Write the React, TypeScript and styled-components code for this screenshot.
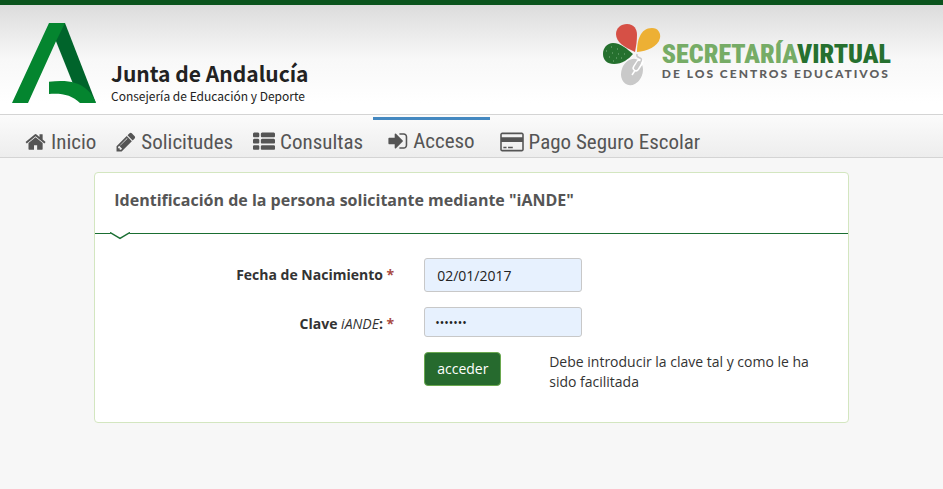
import React, { useState } from "react";
import styled, { createGlobalStyle } from "styled-components";

const GlobalStyle = createGlobalStyle`
  *, *::before, *::after { box-sizing: border-box; }
  body {
    margin: 0;
    background: #f7f7f7;
    color: #333;
    font-family: "Open Sans", "Noto Sans", sans-serif;
    font-size: 14px;
    line-height: 20px;
  }
`;

const Header = styled.header`
  display: flex;
  justify-content: space-between;
  align-items: flex-start;
  padding: 18px 52px 11px 12px;
  border-top: 5px solid #0b541d;
  background: linear-gradient(#dcdcdc, #f8f8f8 50%, #ffffff 90%);
`;

const Brand = styled.a`
  display: flex;
  align-items: flex-end;
  gap: 15px;
  color: #222;
  text-decoration: none;
`;

const BrandMark = styled.svg`
  width: 84px;
  height: 80px;
`;

const BrandText = styled.div`
  display: flex;
  flex-direction: column;
  font-family: "Noto Sans CJK SC", "Noto Sans", sans-serif;
  white-space: nowrap;
`;

const BrandName = styled.strong`
  font-size: 21px;
  line-height: 32px;
`;

const BrandUnit = styled.span`
  font-size: 12px;
  line-height: 14px;
`;

const Portal = styled.a`
  display: flex;
  text-decoration: none;
  white-space: nowrap;
`;

const PortalMark = styled.svg`
  width: 60px;
  height: 64px;
`;

const PortalText = styled.div`
  display: flex;
  flex-direction: column;
  padding-top: 18px;
`;

const PortalName = styled.strong`
  color: #76ac66;
  font-family: "Roboto Condensed", Roboto, sans-serif;
  font-size: 26px;
  font-weight: 900;
  line-height: 26px;
`;

const PortalNameDark = styled.span`
  color: #26702f;
`;

const PortalTagline = styled.span`
  color: #5f5f5f;
  font-family: Lato, sans-serif;
  font-size: 12px;
  font-weight: 900;
  letter-spacing: 2px;
  line-height: 14px;
`;

const Nav = styled.nav`
  display: flex;
  align-items: stretch;
  height: 44px;
  padding-left: 15px;
  border-top: 1px solid #d4d4d4;
  border-bottom: 1px solid #d4d4d4;
  background: linear-gradient(#fbfbfb, #ededed);
`;

const NavLink = styled.a<{ $active?: boolean }>`
  display: flex;
  align-items: center;
  gap: 5px;
  margin-top: 2px;
  padding: ${(p) => (p.$active ? "4px 15px 0" : "9px 10px 0")};
  border-top: ${(p) => (p.$active ? "3px solid #4488c0" : "0")};
  color: #555;
  font-family: "Roboto Condensed", "Liberation Sans", sans-serif;
  font-size: 21px;
  line-height: 26px;
  text-decoration: none;
  white-space: nowrap;
`;

const NavIcon = styled.svg<{ $w: number }>`
  width: ${(p) => p.$w}px;
  height: 22px;
  flex: none;
  fill: currentColor;
`;

const Card = styled.main`
  width: 80%;
  margin: 14px auto 0;
  border: 1px solid #d3e6c0;
  border-radius: 4px;
  background: #fff;
`;

const CardHeader = styled.header`
  position: relative;
  padding: 17px 19px 23px;
  border-bottom: 1px solid #1a6e32;
`;

const CardTitle = styled.h1`
  margin: 0;
  color: #555;
  font-size: 16px;
  line-height: 20px;
`;

const Notch = styled.svg`
  position: absolute;
  left: 15px;
  bottom: -8px;
  width: 20px;
  height: 9px;
`;

const Form = styled.form`
  display: grid;
  grid-template-columns: 12fr 17fr;
  column-gap: 30px;
  row-gap: 15px;
  align-items: start;
  padding: 24px 0 30px;
`;

const Label = styled.label`
  padding-top: 7px;
  font-weight: 700;
  text-align: right;
`;

const Required = styled.span`
  color: #a94a42;
`;

const Thin = styled.em`
  font-weight: 400;
`;

const Input = styled.input<{ $small?: boolean }>`
  width: 158px;
  height: ${(p) => (p.$small ? 30 : 34)}px;
  padding: ${(p) => (p.$small ? "0 10px" : "0 12px")};
  border: 1px solid #c8c8c8;
  border-radius: 3px;
  background: #e7f1fe;
  color: #222;
  font-family: inherit;
  font-size: ${(p) => (p.$small ? 12 : 14)}px;
`;

const Actions = styled.div`
  grid-column: 2;
  display: grid;
  grid-template-columns: 125px 1fr;
  align-items: start;
  padding-right: 30px;
`;

const Submit = styled.button`
  justify-self: start;
  height: 34px;
  padding: 0 12px 2px;
  border: 1px solid #6aa84f;
  border-radius: 4px;
  background: #266a2e;
  color: #fff;
  font-family: inherit;
  font-size: 14px;
  cursor: pointer;
`;

const Hint = styled.p`
  margin: 0;
`;

const navItems = [
  {
    label: "Inicio",
    width: 21,
    box: "40 0 1700 1792",
    path: "M1472 992v480q0 26-19 45t-45 19h-384v-384h-256v384h-384q-26 0-45-19t-19-45v-480q0-1 .5-3t.5-3l575-474 575 474q1 2 1 6zm223-69l-62 74q-8 9-21 11h-3q-13 0-21-7l-692-577-692 577q-12 8-24 7-13-2-21-11l-62-74q-8-10-7-23.5t11-21.5l719-599q32-26 76-26t76 26l244 204v-195q0-14 9-23t23-9h192q14 0 23 9t9 23v408l219 182q10 8 11 21.5t-7 23.5z",
  },
  {
    label: "Solicitudes",
    width: 20,
    box: "100 0 1600 1792",
    path: "M491 1536l91-91-235-235-91 91v107h128v128h107zm523-928q0-22-22-22-10 0-17 7l-542 542q-7 7-7 17 0 22 22 22 10 0 17-7l542-542q7-7 7-17zm-54-192l416 416-832 832h-416v-416zm683 96q0 53-37 90l-166 166-416-416 166-165q36-38 90-38 53 0 91 38l235 234q37 39 37 91z",
  },
  {
    label: "Consultas",
    width: 22,
    box: "0 0 1792 1792",
    path: "M512 1248v192q0 40-28 68t-68 28h-320q-40 0-68-28t-28-68v-192q0-40 28-68t68-28h320q40 0 68 28t28 68zm0-512v192q0 40-28 68t-68 28h-320q-40 0-68-28t-28-68v-192q0-40 28-68t68-28h320q40 0 68 28t28 68zm1280 512v192q0 40-28 68t-68 28h-960q-40 0-68-28t-28-68v-192q0-40 28-68t68-28h960q40 0 68 28t28 68zm-1280-1024v192q0 40-28 68t-68 28h-320q-40 0-68-28t-28-68v-192q0-40 28-68t68-28h320q40 0 68 28t28 68zm1280 512v192q0 40-28 68t-68 28h-960q-40 0-68-28t-28-68v-192q0-40 28-68t68-28h960q40 0 68 28t28 68zm0-512v192q0 40-28 68t-68 28h-960q-40 0-68-28t-28-68v-192q0-40 28-68t68-28h960q40 0 68 28t28 68z",
  },
  {
    label: "Acceso",
    width: 20,
    box: "110 0 1600 1792",
    active: true,
    path: "M1312 896q0 26-19 45l-544 544q-19 19-45 19t-45-19-19-45v-288h-448q-26 0-45-19t-19-45v-384q0-26 19-45t45-19h448v-288q0-26 19-45t45-19 45 19l544 544q19 19 19 45zm352-352v704q0 119-84.5 203.5t-203.5 84.5h-320q-13 0-22.5-9.5t-9.5-22.5q0-4-1-20t-.5-26.5 3-23.5 10-19.5 20.5-6.5h320q66 0 113-47t47-113v-704q0-66-47-113t-113-47h-312l-11.5-1-11.5-3-8-5.5-7-9-2-13.5q0-4-1-20t-.5-26.5 3-23.5 10-19.5 20.5-6.5h320q119 0 203.5 84.5t84.5 203.5z",
  },
  {
    label: "Pago Seguro Escolar",
    width: 24,
    box: "0 0 1920 1792",
    path: "M160 128h1600q66 0 113 47t47 113v1216q0 66-47 113t-113 47H160q-66 0-113-47T0 1504V288q0-66 47-113t113-47zm0 128q-13 0-22.5 9.5T128 288v224h1664V288q0-13-9.5-22.5T1760 256zm1600 1280q13 0 22.5-9.5t9.5-22.5V896H128v608q0 13 9.5 22.5t22.5 9.5zM256 1408v-128h256v128zm384 0v-128h384v128z",
  },
];

export default function App() {
  const [birth, setBirth] = useState("02/01/2017");
  const [code, setCode] = useState("1234567");

  return (
    <>
      <GlobalStyle />
      <Header>
        <Brand href="#">
          <BrandMark viewBox="0 0 84 79" preserveAspectRatio="none" aria-hidden="true">
            <path d="M37 0h16l31 79-23-19L44 18z" fill="#00642b" />
            <path d="M37 0h16l-9 18L16 79H0z" fill="#04852f" />
            <path d="M37 58c17-2 29 0 37 7 5 4 8 9 10 14H68C60 71 50 69 37 70z" fill="#04852f" />
          </BrandMark>
          <BrandText>
            <BrandName>Junta de Andalucía</BrandName>
            <BrandUnit>Consejería de Educación y Deporte</BrandUnit>
          </BrandText>
        </Brand>
        <Portal href="#">
          <PortalMark viewBox="0 0 60 64" aria-hidden="true">
            <path d="M33 29C22 24 14 19 14 11 14 5 19 1 25 1c7 0 10 5 10 11 0 6-1 12-2 17z" fill="#d65046" />
            <path d="M35 29c0-11 3-24 15-24 6 0 9 5 8 10-2 9-13 13-23 14z" fill="#edb034" />
            <path d="M31 31c-4 5-11 10-19 10C5 41 1 37 1 31c0-6 4-11 10-11 8 0 14 6 20 11z" fill="#25702e" />
            <path d="M4 28h1m4-4h1m5 2h1m-6 4h1m5 1h1m5 0h1M7 34h1m6 1h1m-4 3h1m7-3h1" stroke="#7fb182" />
            <ellipse cx="30" cy="49" rx="10.5" ry="13.500" transform="rotate(22 30 49)" fill="#c9c9c9" />
            <path d="M34 45l4-6" stroke="#fff" strokeWidth="7" strokeLinecap="round" fill="none" />
            <path d="M30 52l4-6" stroke="#fff" strokeWidth="1.5" fill="none" />
            <path d="M34 45l3-5" stroke="#c9c9c9" strokeWidth="4" strokeLinecap="round" fill="none" />
            <path d="M38 40c2-3 2-4 0-5s-4-1-3-4" stroke="#c9c9c9" strokeWidth="1.5" fill="none" />
          </PortalMark>
          <PortalText>
            <PortalName>
              SECRETARÍA<PortalNameDark>VIRTUAL</PortalNameDark>
            </PortalName>
            <PortalTagline>DE LOS CENTROS EDUCATIVOS</PortalTagline>
          </PortalText>
        </Portal>
      </Header>

      <Nav>
        {navItems.map((item) => (
          <NavLink key={item.label} href="#" $active={item.active} aria-current={item.active ? "page" : undefined}>
            <NavIcon $w={item.width} viewBox={item.box} aria-hidden="true">
              <path d={item.path} />
            </NavIcon>
            {item.label}
          </NavLink>
        ))}
      </Nav>

      <Card>
        <CardHeader>
          <CardTitle>Identificación de la persona solicitante mediante "iANDE"</CardTitle>
          <Notch viewBox="0 0 20 9" aria-hidden="true">
            <path d="M0 0h20v1L10 7 0 1z" fill="#fff" />
            <path d="M0 .5l10 6 10-6" fill="none" stroke="#1a6e32" strokeWidth="1.5" />
          </Notch>
        </CardHeader>
        <Form onSubmit={(e) => e.preventDefault()}>
          <Label htmlFor="birth">
            Fecha de Nacimiento <Required>*</Required>
          </Label>
          <Input id="birth" type="text" value={birth} onChange={(e) => setBirth(e.target.value)} />
          <Label htmlFor="code">
            Clave <Thin>iANDE</Thin>: <Required>*</Required>
          </Label>
          <Input id="code" type="password" $small value={code} onChange={(e) => setCode(e.target.value)} />
          <Actions>
            <Submit type="submit">acceder</Submit>
            <Hint>Debe introducir la clave tal y como le ha sido facilitada</Hint>
          </Actions>
        </Form>
      </Card>
    </>
  );
}
